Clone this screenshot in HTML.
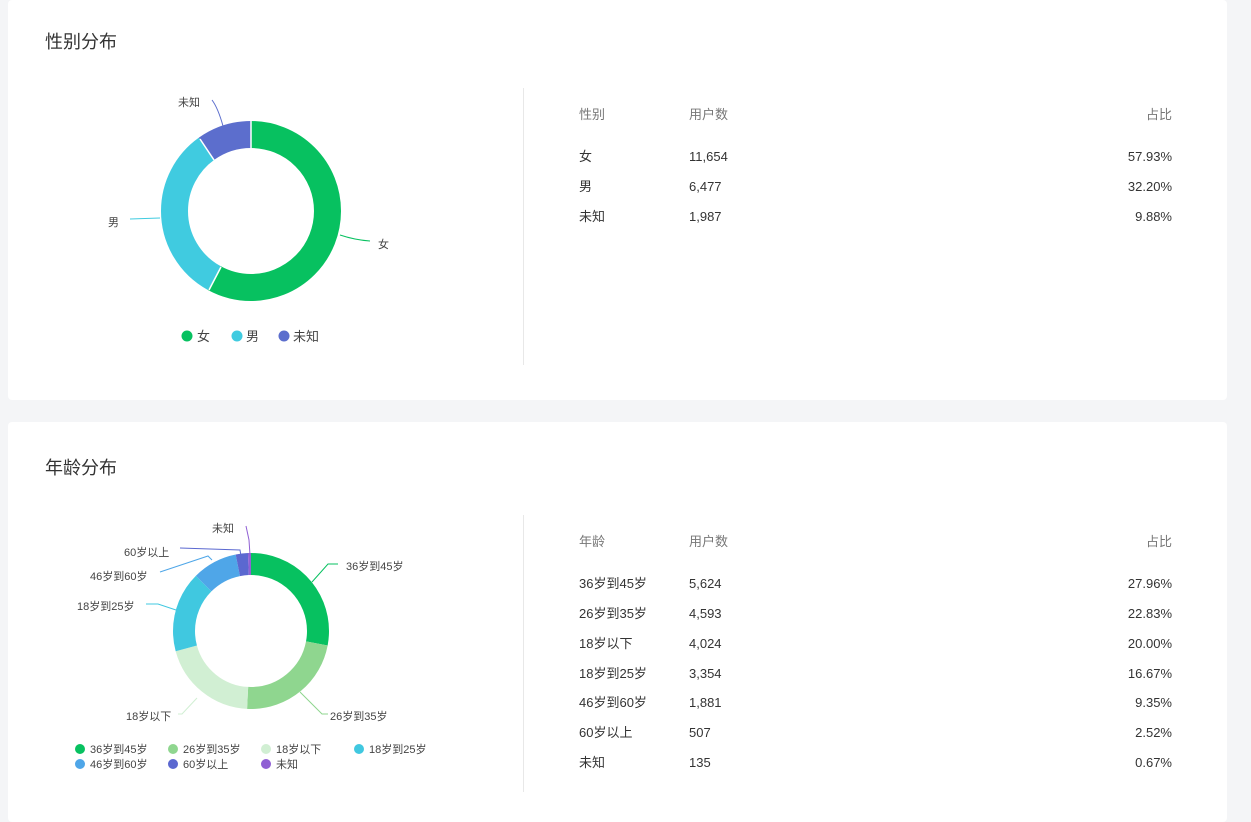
<!DOCTYPE html>
<html><head><meta charset="utf-8"><style>
body{margin:0;background:#f4f5f7;font-family:"Liberation Sans","Noto Sans CJK SC",sans-serif;color:#333;width:1251px;height:818px;overflow:hidden;position:relative}
.card{position:absolute;left:8px;width:1219px;background:#fff;border-radius:4px}
.t{position:absolute;font-size:18px;color:#333;line-height:22px}
.div{position:absolute;left:515px;width:1px;background:#e8e8e8}
.tx{position:absolute;font-size:13px;white-space:nowrap;line-height:16px;height:16px}
.h{color:#777}
svg{position:absolute;left:0;top:0}
svg text{font-family:"Liberation Sans","Noto Sans CJK SC",sans-serif;font-size:11px;fill:#444}
</style></head><body>
<div class="card" style="top:0;height:400px">
<div class="t" style="left:37px;top:31px">性别分布</div>
<div class="div" style="top:88px;height:277px"></div>
</div>
<div class="card" style="top:422px;height:400px">
<div class="t" style="left:37px;top:35px">年龄分布</div>
<div class="div" style="top:93px;height:277px"></div>
</div>

<svg width="1251" height="818">
<g transform="rotate(-90 251 211)" fill="none" stroke-width="27">
<circle cx="251" cy="211" r="76.5" stroke="#07c160" stroke-dasharray="278.45 480.66" stroke-dashoffset="0"/>
<circle cx="251" cy="211" r="76.5" stroke="#40cbe0" stroke-dasharray="154.77 480.66" stroke-dashoffset="-278.45"/>
<circle cx="251" cy="211" r="76.5" stroke="#5c6ecd" stroke-dasharray="47.49 480.66" stroke-dashoffset="-433.22"/>
</g>
<g stroke="#fff" stroke-width="1.5"><line x1="251" y1="120" x2="251" y2="149"/><line x1="209" y1="290" x2="221" y2="267"/><line x1="200" y1="139" x2="214" y2="160"/></g>
<path d="M340 235 Q355 240 370 241" stroke="#07c160" fill="none"/>
<path d="M160 218 L130 219" stroke="#40cbe0" fill="none"/>
<path d="M223 126 Q218 108 212 100" stroke="#5c6ecd" fill="none"/>
<text x="378" y="248">女</text><text x="108" y="226">男</text><text x="178" y="106">未知</text>
<circle cx="187" cy="336" r="5.5" fill="#07c160"/><circle cx="237" cy="336" r="5.5" fill="#40cbe0"/><circle cx="284" cy="336" r="5.5" fill="#5c6ecd"/>
<text x="197" y="341" style="font-size:13px">女</text><text x="246" y="341" style="font-size:13px">男</text><text x="293" y="341" style="font-size:13px">未知</text>

<g transform="rotate(-90 251 631)" fill="none" stroke-width="22">
<circle cx="251" cy="631" r="67" stroke="#07c160" stroke-dasharray="117.70 420.97" stroke-dashoffset="0"/>
<circle cx="251" cy="631" r="67" stroke="#8fd68f" stroke-dasharray="96.11 420.97" stroke-dashoffset="-117.70"/>
<circle cx="251" cy="631" r="67" stroke="#d1efd3" stroke-dasharray="84.19 420.97" stroke-dashoffset="-213.81"/>
<circle cx="251" cy="631" r="67" stroke="#40c8e0" stroke-dasharray="70.18 420.97" stroke-dashoffset="-298.00"/>
<circle cx="251" cy="631" r="67" stroke="#4fa6e8" stroke-dasharray="39.36 420.97" stroke-dashoffset="-368.18"/>
<circle cx="251" cy="631" r="67" stroke="#5b68d0" stroke-dasharray="10.61 420.97" stroke-dashoffset="-407.54"/>
<circle cx="251" cy="631" r="67" stroke="#9060d4" stroke-dasharray="2.82 420.97" stroke-dashoffset="-418.15"/>
</g>
<g fill="none" stroke-width="1">
<path d="M312 582 L328 564 L338 564" stroke="#07c160"/>
<path d="M300 692 L322 714 L328 714" stroke="#8fd68f"/>
<path d="M197 698 L182 714 L178 714" stroke="#d1efd3"/>
<path d="M176 610 L158 604 L146 604" stroke="#40c8e0"/>
<path d="M212 560 L208 556 L160 572" stroke="#4fa6e8"/>
<path d="M241 556 L240 550 L180 548" stroke="#5b68d0"/>
<path d="M250 555 L249 540 L246 526" stroke="#9060d4"/>
</g>
<text x="346" y="570">36岁到45岁</text><text x="330" y="720">26岁到35岁</text><text x="126" y="720">18岁以下</text>
<text x="77" y="610">18岁到25岁</text><text x="90" y="580">46岁到60岁</text><text x="124" y="556">60岁以上</text><text x="212" y="532">未知</text>
<circle cx="80" cy="749" r="5" fill="#07c160"/><circle cx="173" cy="749" r="5" fill="#8fd68f"/><circle cx="266" cy="749" r="5" fill="#d1efd3"/><circle cx="359" cy="749" r="5" fill="#40c8e0"/>
<circle cx="80" cy="764" r="5" fill="#4fa6e8"/><circle cx="173" cy="764" r="5" fill="#5b68d0"/><circle cx="266" cy="764" r="5" fill="#9060d4"/>
<text x="90" y="753">36岁到45岁</text><text x="183" y="753">26岁到35岁</text><text x="276" y="753">18岁以下</text><text x="369" y="753">18岁到25岁</text>
<text x="90" y="768">46岁到60岁</text><text x="183" y="768">60岁以上</text><text x="276" y="768">未知</text>
</svg>

<div class="tx h" style="left:579px;top:107px">性别</div><div class="tx h" style="left:689px;top:107px">用户数</div><div class="tx h" style="right:79px;top:107px">占比</div>
<div class="tx" style="left:579px;top:149px">女</div><div class="tx" style="left:689px;top:149px">11,654</div><div class="tx" style="right:79px;top:149px">57.93%</div>
<div class="tx" style="left:579px;top:179px">男</div><div class="tx" style="left:689px;top:179px">6,477</div><div class="tx" style="right:79px;top:179px">32.20%</div>
<div class="tx" style="left:579px;top:209px">未知</div><div class="tx" style="left:689px;top:209px">1,987</div><div class="tx" style="right:79px;top:209px">9.88%</div>

<div class="tx h" style="left:579px;top:534px">年龄</div><div class="tx h" style="left:689px;top:534px">用户数</div><div class="tx h" style="right:79px;top:534px">占比</div>
<div class="tx" style="left:579px;top:576px">36岁到45岁</div><div class="tx" style="left:689px;top:576px">5,624</div><div class="tx" style="right:79px;top:576px">27.96%</div>
<div class="tx" style="left:579px;top:606px">26岁到35岁</div><div class="tx" style="left:689px;top:606px">4,593</div><div class="tx" style="right:79px;top:606px">22.83%</div>
<div class="tx" style="left:579px;top:636px">18岁以下</div><div class="tx" style="left:689px;top:636px">4,024</div><div class="tx" style="right:79px;top:636px">20.00%</div>
<div class="tx" style="left:579px;top:666px">18岁到25岁</div><div class="tx" style="left:689px;top:666px">3,354</div><div class="tx" style="right:79px;top:666px">16.67%</div>
<div class="tx" style="left:579px;top:695px">46岁到60岁</div><div class="tx" style="left:689px;top:695px">1,881</div><div class="tx" style="right:79px;top:695px">9.35%</div>
<div class="tx" style="left:579px;top:725px">60岁以上</div><div class="tx" style="left:689px;top:725px">507</div><div class="tx" style="right:79px;top:725px">2.52%</div>
<div class="tx" style="left:579px;top:755px">未知</div><div class="tx" style="left:689px;top:755px">135</div><div class="tx" style="right:79px;top:755px">0.67%</div>
</body></html>
